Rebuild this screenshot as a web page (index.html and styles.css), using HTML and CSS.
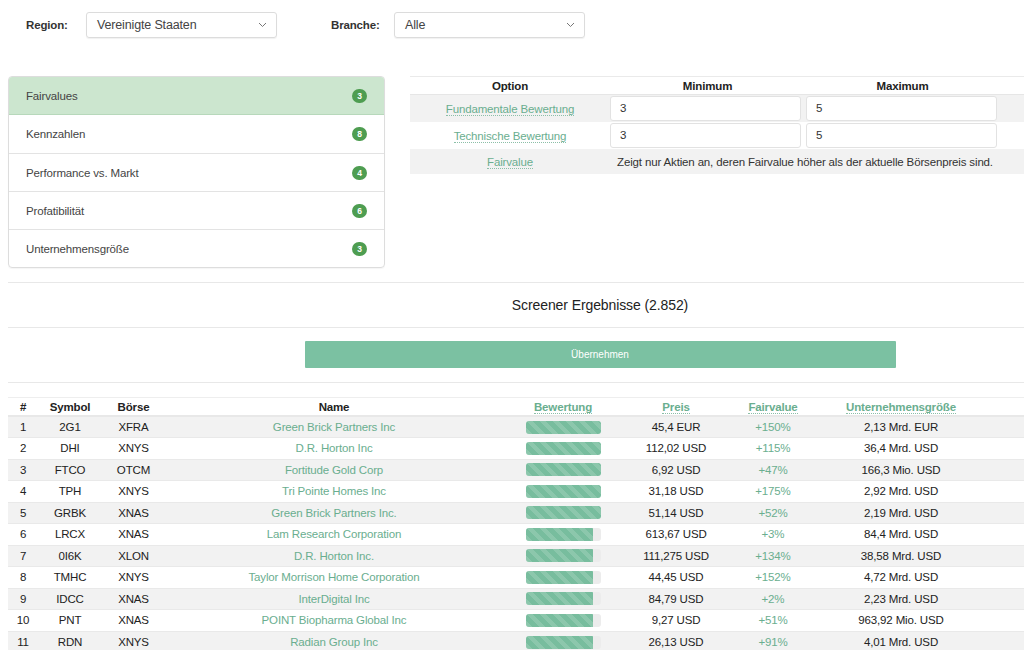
FILE: index.html
```html
<!DOCTYPE html>
<html lang="de">
<head>
<meta charset="utf-8">
<title>Screener</title>
<link rel="stylesheet" href="styles.css">
</head>
<body>
<div class="page">
  <div class="filters">
    <label class="flabel lab-region">Region:</label>
    <div class="select"><span>Vereinigte Staaten</span><svg class="chev" width="9" height="6" viewBox="0 0 9 6"><path d="M1 1l3.5 3.5L8 1" fill="none" stroke="#777" stroke-width="1"/></svg></div>
    <label class="flabel lab-branche">Branche:</label>
    <div class="select"><span>Alle</span><svg class="chev" width="9" height="6" viewBox="0 0 9 6"><path d="M1 1l3.5 3.5L8 1" fill="none" stroke="#777" stroke-width="1"/></svg></div>
  </div>

  <div class="settings">
    <ul class="groups">
      <li class="active"><span>Fairvalues</span><b class="badge">3</b></li>
      <li><span>Kennzahlen</span><b class="badge">8</b></li>
      <li><span>Performance vs. Markt</span><b class="badge">4</b></li>
      <li><span>Profatibilität</span><b class="badge">6</b></li>
      <li><span>Unternehmensgröße</span><b class="badge">3</b></li>
    </ul>
    <table class="opts">
      <colgroup><col class="c-opt"><col class="c-min"><col class="c-max"><col></colgroup>
      <thead><tr><th>Option</th><th>Minimum</th><th>Maximum</th><th></th></tr></thead>
      <tbody>
        <tr class="alt"><td><a class="dl">Fundamentale Bewertung</a></td><td><div class="inp">3</div></td><td><div class="inp">5</div></td><td></td></tr>
        <tr><td><a class="dl">Technische Bewertung</a></td><td><div class="inp">3</div></td><td><div class="inp">5</div></td><td></td></tr>
        <tr class="alt last"><td><a class="dl">Fairvalue</a></td><td colspan="2" class="desc">Zeigt nur Aktien an, deren Fairvalue höher als der aktuelle Börsenpreis sind.</td><td></td></tr>
      </tbody>
    </table>
  </div>

  <hr class="sep sep1">
  <h2 class="title">Screener Ergebnisse (2.852)</h2>
  <hr class="sep sep2">
  <div class="btnrow"><button class="apply">Übernehmen</button></div>
  <hr class="sep sep3">

  <table class="results">
    <colgroup>
      <col class="r-n"><col class="r-sym"><col class="r-ex"><col class="r-name"><col class="r-bew"><col class="r-pr"><col class="r-fv"><col class="r-size"><col>
    </colgroup>
    <thead>
      <tr><th>#</th><th>Symbol</th><th>Börse</th><th>Name</th><th><span class="dh">Bewertung</span></th><th><span class="dh">Preis</span></th><th><span class="dh">Fairvalue</span></th><th><span class="dh">Unternehmensgröße</span></th><th></th></tr>
    </thead>
    <tbody>
      <tr><td>1</td><td>2G1</td><td>XFRA</td><td class="lnk">Green Brick Partners Inc</td><td><div class="bar"><div class="fill" style="width:100%"></div></div></td><td>45,4 EUR</td><td class="lnk">+150%</td><td>2,13 Mrd. EUR</td><td></td></tr>
      <tr><td>2</td><td>DHI</td><td>XNYS</td><td class="lnk">D.R. Horton Inc</td><td><div class="bar"><div class="fill" style="width:100%"></div></div></td><td>112,02 USD</td><td class="lnk">+115%</td><td>36,4 Mrd. USD</td><td></td></tr>
      <tr><td>3</td><td>FTCO</td><td>OTCM</td><td class="lnk">Fortitude Gold Corp</td><td><div class="bar"><div class="fill" style="width:100%"></div></div></td><td>6,92 USD</td><td class="lnk">+47%</td><td>166,3 Mio. USD</td><td></td></tr>
      <tr><td>4</td><td>TPH</td><td>XNYS</td><td class="lnk">Tri Pointe Homes Inc</td><td><div class="bar"><div class="fill" style="width:100%"></div></div></td><td>31,18 USD</td><td class="lnk">+175%</td><td>2,92 Mrd. USD</td><td></td></tr>
      <tr><td>5</td><td>GRBK</td><td>XNAS</td><td class="lnk">Green Brick Partners Inc.</td><td><div class="bar"><div class="fill" style="width:100%"></div></div></td><td>51,14 USD</td><td class="lnk">+52%</td><td>2,19 Mrd. USD</td><td></td></tr>
      <tr><td>6</td><td>LRCX</td><td>XNAS</td><td class="lnk">Lam Research Corporation</td><td><div class="bar"><div class="fill" style="width:90%"></div></div></td><td>613,67 USD</td><td class="lnk">+3%</td><td>84,4 Mrd. USD</td><td></td></tr>
      <tr><td>7</td><td>0I6K</td><td>XLON</td><td class="lnk">D.R. Horton Inc.</td><td><div class="bar"><div class="fill" style="width:90%"></div></div></td><td>111,275 USD</td><td class="lnk">+134%</td><td>38,58 Mrd. USD</td><td></td></tr>
      <tr><td>8</td><td>TMHC</td><td>XNYS</td><td class="lnk">Taylor Morrison Home Corporation</td><td><div class="bar"><div class="fill" style="width:90%"></div></div></td><td>44,45 USD</td><td class="lnk">+152%</td><td>4,72 Mrd. USD</td><td></td></tr>
      <tr><td>9</td><td>IDCC</td><td>XNAS</td><td class="lnk">InterDigital Inc</td><td><div class="bar"><div class="fill" style="width:90%"></div></div></td><td>84,79 USD</td><td class="lnk">+2%</td><td>2,23 Mrd. USD</td><td></td></tr>
      <tr><td>10</td><td>PNT</td><td>XNAS</td><td class="lnk">POINT Biopharma Global Inc</td><td><div class="bar"><div class="fill" style="width:90%"></div></div></td><td>9,27 USD</td><td class="lnk">+51%</td><td>963,92 Mio. USD</td><td></td></tr>
      <tr><td>11</td><td>RDN</td><td>XNYS</td><td class="lnk">Radian Group Inc</td><td><div class="bar"><div class="fill" style="width:90%"></div></div></td><td>26,13 USD</td><td class="lnk">+91%</td><td>4,01 Mrd. USD</td><td></td></tr>
    </tbody>
  </table>
</div>
</body>
</html>
```

FILE: styles.css
```css
html, body {
  margin: 0;
  padding: 0;
  overflow: hidden;
  background: #fff;
}
body {
  font-family: "Liberation Sans", Arial, Helvetica, sans-serif;
  font-size: 11.5px;
  letter-spacing: -0.15px;
  color: #333;
}
.page {
  width: 1184px;
  padding: 0 8px;
}

/* filters */
.filters {
  display: flex;
  align-items: center;
  padding-top: 12px;
  height: 26px;
}
.flabel {
  font-weight: bold;
  font-size: 11.5px;
  color: #333;
}
.lab-region { margin-left: 18px; width: 60px; }
.lab-branche { margin-left: 54px; width: 63px; }
.select {
  box-sizing: border-box;
  width: 191px;
  height: 26px;
  border: 1px solid #dcdcdc;
  border-radius: 3px;
  box-shadow: 0 1px 1px rgba(0,0,0,0.06);
  display: flex;
  align-items: center;
  justify-content: space-between;
  padding: 0 9px 0 10px;
  font-size: 12.5px;
  color: #444;
}

/* settings */
.settings {
  display: flex;
  align-items: flex-start;
  margin-top: 38px;
}
.groups {
  list-style: none;
  margin: 0;
  padding: 0;
  width: 377px;
  box-sizing: border-box;
  border: 1px solid #ddd;
  border-radius: 4px;
  overflow: hidden;
  box-shadow: 0 1px 1px rgba(0,0,0,0.04);
}
.groups li {
  display: flex;
  align-items: center;
  justify-content: space-between;
  height: 38px;
  box-sizing: border-box;
  padding: 0 17px 0 17px;
  border-top: 1px solid #e3e3e3;
  color: #444;
}
.groups li:first-child { border-top: none; height: 38px; }
.groups li.active {
  background: #cce6cf;
  border-bottom: 1px solid #b7d8bb;
}
.groups li.active + li { border-top: none; }
.badge {
  display: inline-flex;
  align-items: center;
  justify-content: center;
  width: 15px;
  height: 14px;
  border-radius: 7px;
  background: #4e9d51;
  color: #fff;
  font-size: 8.5px;
  font-weight: bold;
  letter-spacing: 0;
}

.opts {
  margin-left: 25px;
  flex: 1;
  border-collapse: collapse;
  border-top: 1px solid #eaeaea;
}
.c-opt { width: 200px; }
.c-min { width: 195px; }
.c-max { width: 195px; }
.opts th {
  height: 17px;
  font-weight: bold;
  color: #222;
  padding: 0;
  text-align: center;
  border-bottom: 1px solid #e6e6e6;
}
.opts td {
  height: 27px;
  padding: 0;
  text-align: center;
  vertical-align: middle;
}
.opts tr.alt td { background: #f2f2f2; }
.opts tr.last td { height: 25px; }
.dl {
  color: #6aae8f;
  border-bottom: 1px dotted #8cbfa8;
  text-decoration: none;
}
.inp {
  box-sizing: border-box;
  width: 191px;
  height: 25px;
  margin: 0 auto 0 0;
  background: #fff;
  border: 1px solid #e2e2e2;
  border-radius: 3px;
  text-align: left;
  padding: 0 9px;
  line-height: 23px;
  color: #333;
}
.opts td + td + td .inp { margin-left: 1px; }
.desc { color: #333; white-space: nowrap; }

/* separators */
.sep {
  border: none;
  border-top: 1px solid #e8e8e8;
  margin: 0;
}
.sep1 { margin-top: 14px; }
.title {
  margin: 0;
  height: 44px;
  line-height: 44px;
  text-align: center;
  font-weight: normal;
  font-size: 14px;
  letter-spacing: -0.1px;
  color: #222;
}
.btnrow {
  display: flex;
  justify-content: center;
  padding: 13px 0 14px;
}
.apply {
  width: 591px;
  height: 27px;
  border: none;
  background: #7bc1a2;
  color: #fff;
  font-family: inherit;
  font-size: 10px;
  border-radius: 1px;
}

/* results */
.results {
  width: 100%;
  margin-top: 14px;
  border-collapse: collapse;
  border-top: 1px solid #eee;
}
.r-n { width: 30px; }
.r-sym { width: 64px; }
.r-ex { width: 63px; }
.r-name { width: 338px; }
.r-bew { width: 120px; }
.r-pr { width: 106px; }
.r-fv { width: 88px; }
.r-size { width: 168px; }
.results th {
  height: 17px;
  padding: 0;
  font-weight: bold;
  color: #222;
  text-align: center;
  border-bottom: 2px solid #e8e8e8;
}
.results td {
  height: 21.5px;
  padding: 0;
  text-align: center;
  vertical-align: middle;
  color: #222;
  border-top: 1px solid #e9e9e9;
  box-sizing: border-box;
}
.results tbody tr:nth-child(odd) td { background: #f2f2f2; }
.results td.lnk { color: #6aae8f; }
.dh {
  color: #6aae8f;
  border-bottom: 1px dotted #8cbfa8;
}
.bar {
  width: 75px;
  height: 13px;
  margin: 0 auto;
  background: #ececec;
  border-radius: 3px;
  overflow: hidden;
}
.fill {
  height: 100%;
  background-color: #78bd9e;
  background-image: linear-gradient(45deg, rgba(255,255,255,0.15) 25%, transparent 25%, transparent 50%, rgba(255,255,255,0.15) 50%, rgba(255,255,255,0.15) 75%, transparent 75%, transparent);
  background-size: 13px 13px;
}
```
